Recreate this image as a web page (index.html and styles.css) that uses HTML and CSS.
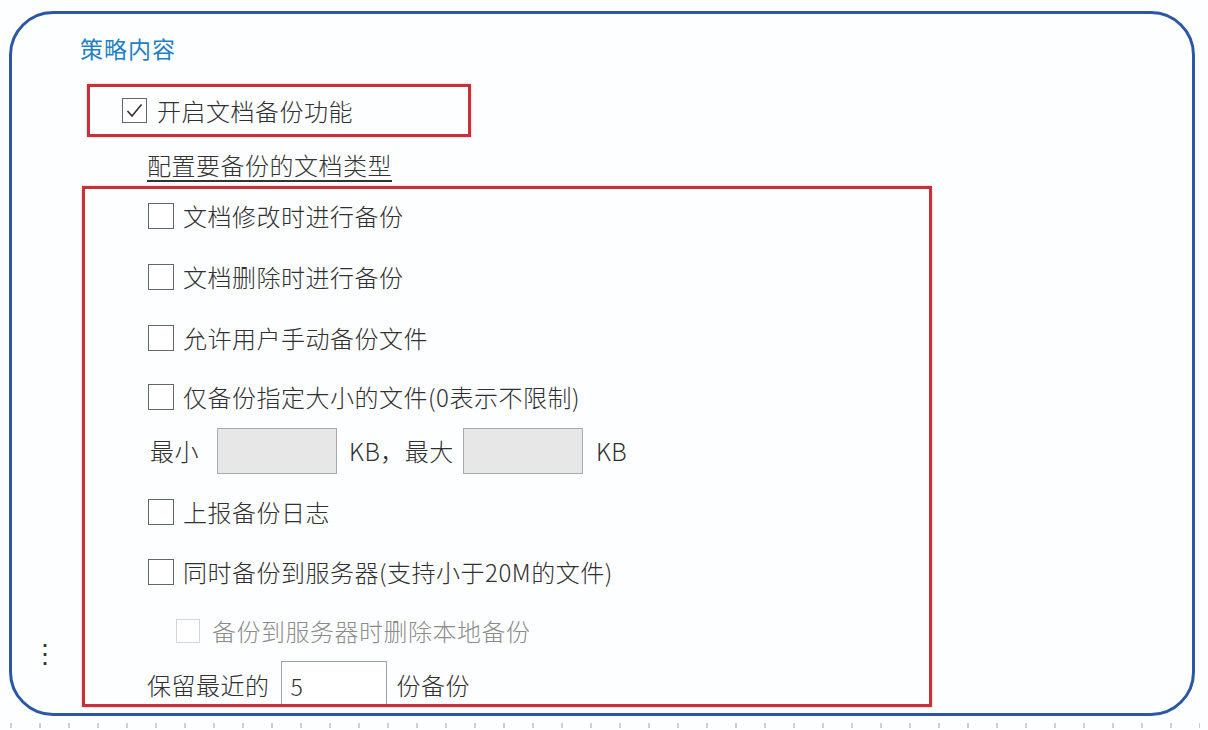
FILE: index.html
```html
<!DOCTYPE html>
<html lang="zh-CN">
<head>
<meta charset="utf-8">
<title>策略内容</title>
<link rel="stylesheet" href="styles.css">
</head>
<body>
<div class="frame">
  <div class="title">策略内容</div>
  <div class="hl hl-top">
    <span class="cb">
      <svg viewBox="0 0 25 25" width="25" height="25"><path d="M5.5 13 L10 18 L19.5 6.5" fill="none" stroke="#333" stroke-width="1.6"/></svg>
    </span>
    <span class="lbl">开启文档备份功能</span>
  </div>
  <div class="link">配置要备份的文档类型</div>
  <div class="gutter">⋮</div>
  <div class="hl hl-main">
    <div class="row r1"><span class="cb"></span><span class="lbl">文档修改时进行备份</span></div>
    <div class="row r2"><span class="cb"></span><span class="lbl">文档删除时进行备份</span></div>
    <div class="row r3"><span class="cb"></span><span class="lbl">允许用户手动备份文件</span></div>
    <div class="row r4"><span class="cb"></span><span class="lbl">仅备份指定大小的文件(0表示不限制)</span></div>
    <div class="size-row">
      <span class="lbl">最小</span>
      <span class="field field-min"></span>
      <span class="lbl kb1">KB，最大</span>
      <span class="field field-max"></span>
      <span class="lbl kb2">KB</span>
    </div>
    <div class="row r6"><span class="cb"></span><span class="lbl">上报备份日志</span></div>
    <div class="row r7"><span class="cb"></span><span class="lbl">同时备份到服务器(支持小于20M的文件)</span></div>
    <div class="row r8 disabled"><span class="cb"></span><span class="lbl">备份到服务器时删除本地备份</span></div>
    <div class="keep-row">
      <span class="lbl">保留最近的</span>
      <span class="field field-keep">5</span>
      <span class="lbl">份备份</span>
    </div>
  </div>
</div>
<div class="ticks"></div>
</body>
</html>
```

FILE: styles.css
```css
html, body {
  margin: 0;
  padding: 0;
  background: #fdfeff;
}
body {
  font-family: "Noto Sans CJK SC", "Noto Sans", sans-serif;
  font-weight: 300;
  color: #303030;
  width: 1208px;
  height: 730px;
  overflow: hidden;
}
.frame {
  box-sizing: border-box;
  margin: 11px 0 0 9px;
  width: 1186px;
  height: 705px;
  border: 3px solid #2a57a8;
  border-radius: 44px;
  background: #fdfeff;
  padding-top: 22px;
  display: grid;
  grid-template-columns: 68px 1fr;
  grid-template-rows: auto auto auto auto;
  align-content: start;
}
.title, .hl-top, .link, .hl-main {
  grid-column: 2;
}
.title {
  grid-row: 1;
  font-size: 23px;
  font-weight: 400;
  line-height: 24px;
  color: #1f80c6;
  letter-spacing: 1px;
}
.hl {
  box-sizing: border-box;
  border: 3px solid #c8313c;
  box-shadow: 0 0 2px rgba(200, 49, 60, 0.4);
}
.hl-top {
  grid-row: 2;
  margin: 24px 0 0 7px;
  width: 384px;
  height: 53px;
  display: flex;
  align-items: center;
  padding-left: 32px;
  gap: 10px;
}
.lbl {
  font-size: 24px;
  line-height: 30px;
  white-space: nowrap;
  letter-spacing: 0.5px;
}
.cb {
  box-sizing: border-box;
  width: 26px;
  height: 26px;
  border: 1.5px solid #666;
  background: #fff;
  flex: none;
  display: block;
}
.hl-top .cb {
  width: 25px;
  height: 25px;
}
.cb svg {
  display: block;
  margin: -1.5px;
}
.link {
  grid-row: 3;
  margin: 14px 0 0 67px;
  font-size: 24px;
  line-height: 28px;
  letter-spacing: 0.5px;
  text-decoration: underline;
  text-underline-offset: 5px;
  text-decoration-thickness: 1.5px;
  color: #333;
}
.gutter {
  grid-row: 4;
  grid-column: 1;
  align-self: end;
  justify-self: start;
  margin: 0 0 38px 20px;
  font-size: 26px;
  line-height: 30px;
  color: #333;
  font-family: "DejaVu Sans", sans-serif;
}
.hl-main {
  grid-row: 4;
  margin: 7px 0 0 2px;
  width: 850px;
  height: 521px;
  overflow: hidden;
  padding-left: 63px;
  display: flex;
  flex-direction: column;
}
.row {
  display: flex;
  align-items: center;
  height: 30px;
  gap: 9px;
  flex: none;
}
.r1 { margin-top: 12px; }
.r2 { margin-top: 31px; }
.r3 { margin-top: 31px; }
.r4 { margin-top: 29px; }
.r6 { margin-top: 23px; }
.r7 { margin-top: 30px; }
.r8 { margin-top: 29px; }
.disabled {
  margin-left: 28px;
  gap: 12px;
}
.disabled .cb {
  width: 24px;
  height: 24px;
  border: 1px solid #d6d6d6;
}
.disabled .lbl {
  color: #8c8c8c;
}
.size-row {
  margin-top: 16px;
  margin-left: 2px;
  height: 46px;
  display: flex;
  align-items: center;
  flex: none;
}
.field {
  box-sizing: border-box;
  display: block;
  height: 46px;
  border: 1px solid #a9a9a9;
  flex: none;
}
.field-min, .field-max {
  width: 120px;
  background: #e7e7e8;
}
.field-min { margin: 0 12px 0 18px; }
.field-max { margin: 0 13px 0 9px; }
.keep-row {
  margin-top: 15px;
  margin-left: -1px;
  height: 46px;
  display: flex;
  align-items: flex-start;
  flex: none;
}
.keep-row .lbl {
  line-height: 46px;
  margin-top: 1px;
}
.field-keep {
  width: 106px;
  margin: 0 10px 0 11px;
  background: #fff;
  border-color: #a0a0a0;
  font-size: 23px;
  line-height: 48px;
  padding-left: 9px;
}
.ticks {
  margin: 7px 0 0 10px;
  width: 1190px;
  height: 5px;
  background: repeating-linear-gradient(90deg, #b9bcc4 0 2px, transparent 2px 29px);
  opacity: 0.7;
}
```
